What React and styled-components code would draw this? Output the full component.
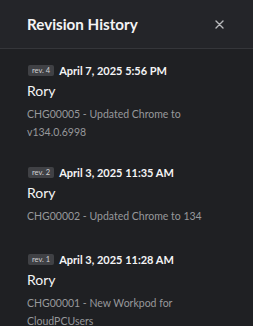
import React from "react";
import styled, { createGlobalStyle } from "styled-components";

const GlobalStyle = createGlobalStyle`
  html, body {
    margin: 0;
    padding: 0;
    background: #1f2023;
  }
  body {
    font-family: Lato, "Noto Sans", sans-serif;
  }
`;

const Panel = styled.div`
  width: 253px;
  height: 326px;
  background: #1f2023;
  color: #ffffff;
  overflow: hidden;
`;

const Header = styled.div`
  height: 49px;
  display: flex;
  align-items: center;
  justify-content: space-between;
  padding: 0 29px 0 27px;
  background: #242529;
  border-bottom: 1px solid #35363a;
  box-sizing: border-box;
`;

const Title = styled.h2`
  margin: 0;
  font-family: Lato, sans-serif;
  font-size: 15.2px;
  font-weight: 700;
  color: #f4f4f5;
`;

const CloseButton = styled.button`
  background: none;
  border: 0;
  padding: 0;
  color: #b8b9bc;
  display: flex;
  cursor: pointer;
`;

const List = styled.div`
  display: flex;
  flex-direction: column;
  padding: 14px 20px 0 27px;
`;

const Entry = styled.div`
  display: flex;
  flex-direction: column;
  margin-bottom: ${(props) => props.gap}px;
`;

const Meta = styled.div`
  display: flex;
  align-items: center;
  gap: 5px;
  height: 14px;
`;

const Badge = styled.span`
  font-family: Lato, sans-serif;
  font-size: 7.5px;
  color: #d2d3d5;
  background: #404145;
  border-radius: 2px;
  padding: 1px 4px;
  line-height: 9px;
  margin-left: 1px;
`;

const Stamp = styled.span`
  font-family: Lato, sans-serif;
  font-size: 11px;
  font-weight: 700;
  color: #f4f4f5;
`;

const Author = styled.div`
  font-family: Lato, sans-serif;
  font-size: 14px;
  color: #f4f4f5;
  margin-top: 5px;
  line-height: 18px;
`;

const Note = styled.div`
  font-family: Lato, sans-serif;
  font-size: 10.5px;
  line-height: 18px;
  color: #97989b;
  margin-top: 5px;
`;

const revisions = [
  {
    rev: 4,
    date: "April 7, 2025 5:56 PM",
    author: "Rory",
    note: "CHG00005 - Updated Chrome to v134.0.6998",
    gap: 24,
  },
  {
    rev: 2,
    date: "April 3, 2025 11:35 AM",
    author: "Rory",
    note: "CHG00002 - Updated Chrome to 134",
    gap: 27,
  },
  {
    rev: 1,
    date: "April 3, 2025 11:28 AM",
    author: "Rory",
    note: "CHG00001 - New Workpod for CloudPCUsers",
    gap: 0,
  },
];

function App() {
  return (
    <Panel>
      <GlobalStyle />
      <Header>
        <Title>Revision History</Title>
        <CloseButton aria-label="Close">
          <svg width="9" height="9" viewBox="0 0 9 9">
            <path d="M1 1L8 8M8 1L1 8" stroke="currentColor" strokeWidth="1.4" strokeLinecap="round" />
          </svg>
        </CloseButton>
      </Header>
      <List>
        {revisions.map((item) => (
          <Entry key={item.rev} gap={item.gap}>
            <Meta>
              <Badge>rev. {item.rev}</Badge>
              <Stamp>{item.date}</Stamp>
            </Meta>
            <Author>{item.author}</Author>
            <Note>{item.note}</Note>
          </Entry>
        ))}
      </List>
    </Panel>
  );
}

export default App;
